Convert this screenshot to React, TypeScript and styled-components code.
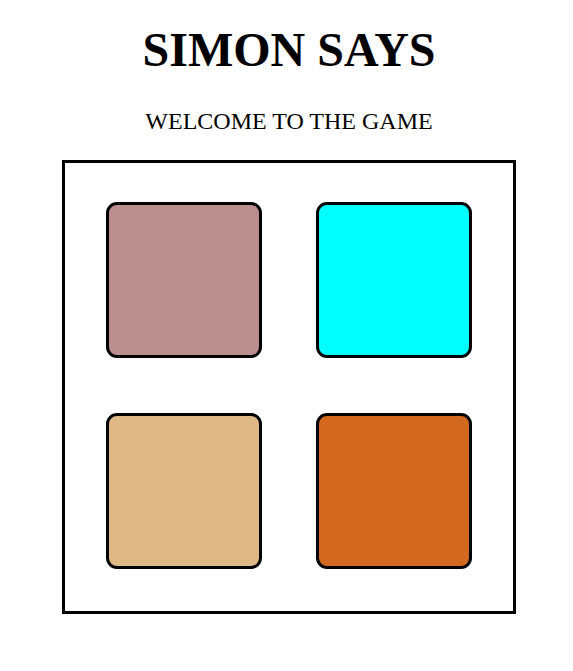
import React from "react";
import styled, { createGlobalStyle } from "styled-components";

const Global = createGlobalStyle`
  html, body { margin: 0; padding: 0; background: #fff; }
  body { font-family: "Liberation Serif", "Times New Roman", serif; color: #000; }
`;

const Page = styled.div`
  display: flex;
  flex-direction: column;
  align-items: center;
  padding: 23px 0 0 5px;
`;

const Title = styled.h1`
  margin: 0;
  font-size: 48px;
  font-weight: 700;
  line-height: 53px;
`;

const Subtitle = styled.h2`
  margin: 32px 0 0;
  font-size: 24px;
  font-weight: 400;
  line-height: 27px;
`;

const Board = styled.div`
  margin-top: 25px;
  box-sizing: border-box;
  width: 454px;
  height: 454px;
  border: 3px solid #000;
  display: grid;
  grid-template-columns: 156px 156px;
  grid-template-rows: 156px 156px;
  column-gap: 54px;
  row-gap: 55px;
  padding: 39px 0 0 41px;
`;

const Pad = styled.button<{ $color: string }>`
  box-sizing: border-box;
  width: 156px;
  height: 156px;
  padding: 0;
  border: 3px solid #000;
  border-radius: 11px;
  background: ${(p) => p.$color};
  cursor: pointer;
`;

const colors = ["#BC8F8F", "#00FFFF", "#DEB887", "#D2691E"];

export default function App() {
  return (
    <>
      <Global />
      <Page>
        <Title>SIMON SAYS</Title>
        <Subtitle>WELCOME TO THE GAME</Subtitle>
        <Board>
          {colors.map((c) => (
            <Pad key={c} $color={c} aria-label={c} />
          ))}
        </Board>
      </Page>
    </>
  );
}
